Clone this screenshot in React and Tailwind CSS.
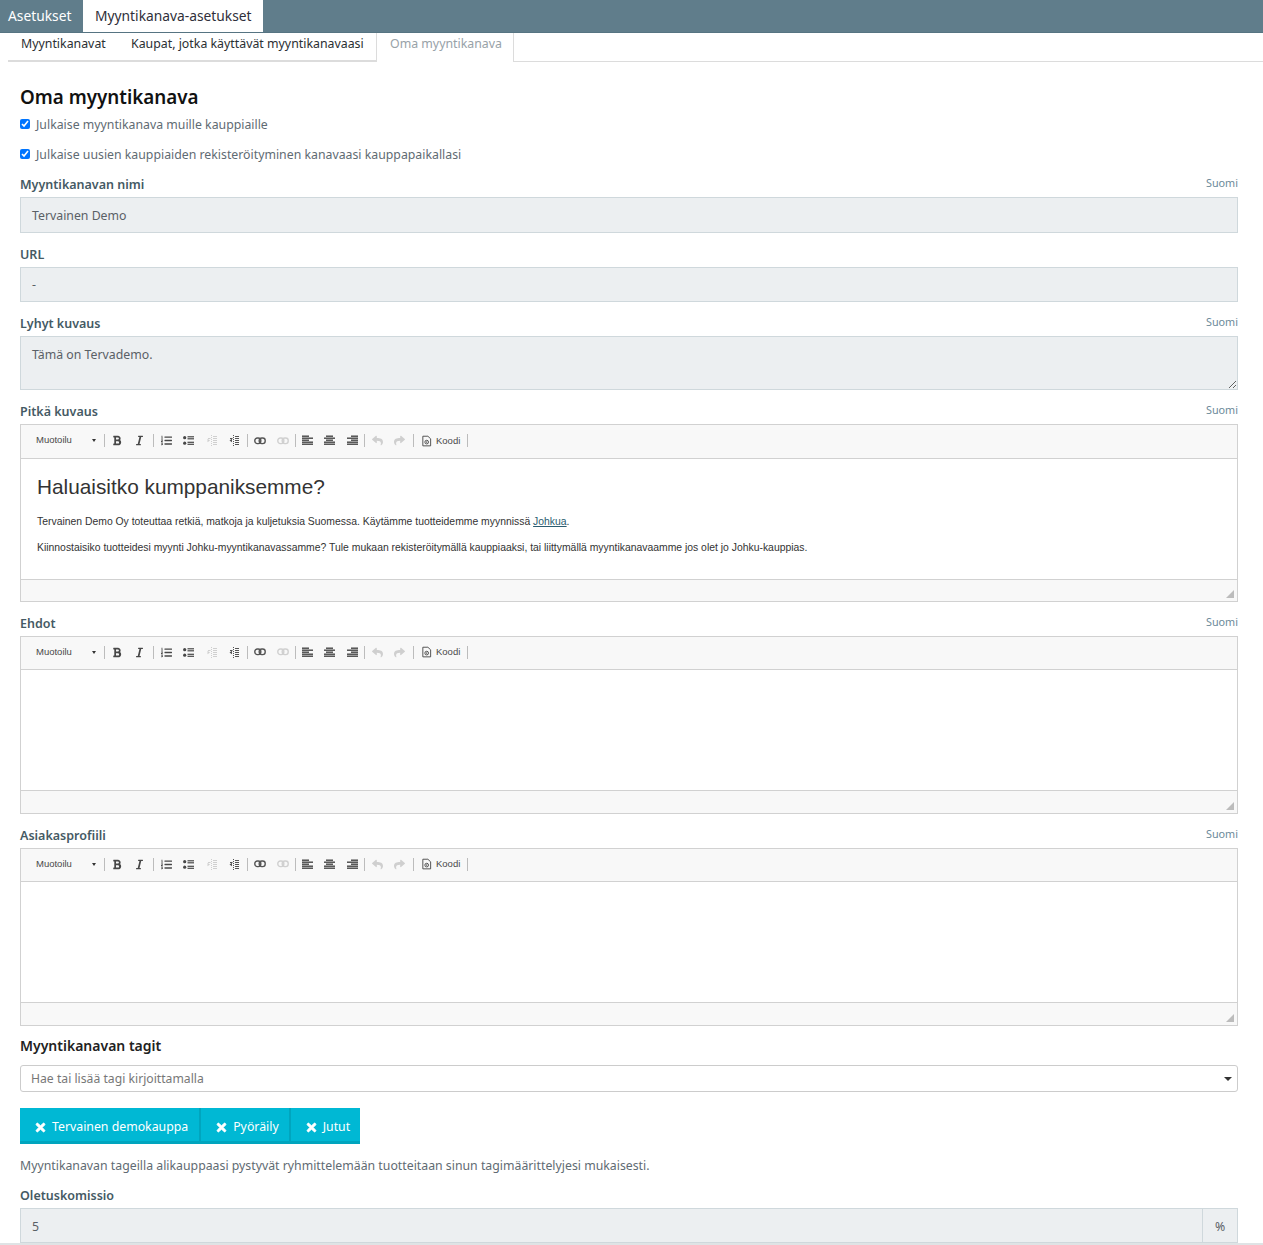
import React from 'react';
import { FaBold, FaItalic, FaListOl, FaReply, FaShare, FaTimes } from 'react-icons/fa';

function Sep() {
  return <span className="w-px h-[13px] bg-[#bcbcbc]" />;
}

function ToolIcon({ icon: Icon, faded, className }) {
  return (
    <span className="w-[22.5px] flex justify-center">
      <Icon className={`${faded ? 'text-[#cfcfcf]' : 'text-[#474747]'} ${className || 'w-[11px] h-[11px]'}`} />
    </span>
  );
}

// cke toolbar glyphs that the icon packs don't have in this shape
function AlignIcon({ rows }) {
  return (
    <svg viewBox="0 0 11 11" className="w-[11px] h-[11px]" fill="currentColor">
      {rows.map((r, i) => (
        <rect key={i} x={r[0]} y={i * 2 + 0.5} width={r[1]} height="1.4" />
      ))}
    </svg>
  );
}

function BulletIcon() {
  return (
    <svg viewBox="0 0 11 11" className="w-[11px] h-[11px]" fill="currentColor">
      <circle cx="1.7" cy="2.7" r="1.6" />
      <circle cx="1.7" cy="8.2" r="1.6" />
      <rect x="4.5" y="1.2" width="6.5" height="1.2" />
      <rect x="4.5" y="3.2" width="6.5" height="1.2" />
      <rect x="4.5" y="6.7" width="6.5" height="1.2" />
      <rect x="4.5" y="8.7" width="6.5" height="1.2" />
    </svg>
  );
}

function IndentIcon({ faded, flip }) {
  return (
    <svg viewBox="0 0 11 11" className={`w-[11px] h-[11px] ${faded ? 'text-[#cfcfcf]' : 'text-[#555]'}`} fill="currentColor">
      <path d="M5 0h1v1H5zM5 2h1v1H5zM5 4h1v1H5zM5 6h1v1H5zM5 8h1v1H5zM5 10h1v1H5z" />
      <rect x="7" y="1" width="4" height="1" />
      <rect x="7" y="3" width="4" height="1" />
      <rect x="7" y="5" width="4" height="1" />
      <rect x="7" y="7" width="4" height="1" />
      <rect x="7" y="9" width="4" height="1" />
      <rect x="2" y="3" width="2.5" height="1" />
      <path d={flip ? 'M1.5 5.5L4 3.8v3.4z' : 'M4 5.5L1.5 3.8v3.4z'} />
    </svg>
  );
}

function ChainIcon({ faded }) {
  return (
    <svg viewBox="0 0 12 8" className={`w-[12px] h-[8px] ${faded ? 'text-[#d0d0d0]' : 'text-[#555]'}`} fill="none" stroke="currentColor" strokeWidth="1.4">
      <rect x="0.8" y="1" width="6" height="5.6" rx="2.6" />
      <rect x="5.2" y="1" width="6" height="5.6" rx="2.6" />
    </svg>
  );
}

function SourceIcon() {
  return (
    <svg viewBox="0 0 12 12" className="w-[11px] h-[12px] text-[#474747]" fill="none" stroke="currentColor">
      <path d="M2 .8h5.5L10.5 3.6v7.7H2z" strokeWidth="1" />
      <circle cx="6.2" cy="7.2" r="2" strokeWidth="1" />
      <path d="M6.2 6.4v1.6" strokeWidth="1" />
    </svg>
  );
}

function Box({ children, faded }) {
  return (
    <span className={`w-[22.5px] flex justify-center ${faded ? 'text-[#cfcfcf]' : 'text-[#474747]'}`}>{children}</span>
  );
}

function Toolbar({ compact }) {
  return (
    <div className={`${compact ? 'h-[33px]' : 'h-[34px]'} pb-[2px] bg-[#f8f8f8] border-b border-[#d1d1d1] flex items-center pl-[15px] text-[#484848] shrink-0`}>
      <span className="w-[56px] text-[9.5px] font-['Liberation_Sans',sans-serif] leading-none -mt-px">Muotoilu</span>
      <span className="w-0 h-0 border-x-[2.5px] border-x-transparent border-t-[3px] border-t-[#333] mr-[8px]" />
      <Sep />
      <div className="flex items-center w-[48px] pl-[1px]">
        <ToolIcon icon={FaBold} className="w-[10px] h-[11px]" />
        <ToolIcon icon={FaItalic} className="w-[9px] h-[11px]" />
      </div>
      <Sep />
      <div className="flex items-center pl-[1px] w-[93px]">
        <ToolIcon icon={FaListOl} />
        <Box><BulletIcon /></Box>
        <Box><IndentIcon faded /></Box>
        <Box><IndentIcon flip /></Box>
      </div>
      <Sep />
      <div className="flex items-center pl-[1px] w-[47px]">
        <Box><ChainIcon /></Box>
        <Box><ChainIcon faded /></Box>
      </div>
      <Sep />
      <div className="flex items-center w-[68px]">
        <Box><AlignIcon rows={[[0, 7], [0, 11], [0, 7], [0, 11], [0, 11]]} /></Box>
        <Box><AlignIcon rows={[[2, 7], [0, 11], [2, 7], [0, 11], [0, 11]]} /></Box>
        <Box><AlignIcon rows={[[4, 7], [0, 11], [4, 7], [0, 11], [0, 11]]} /></Box>
      </div>
      <Sep />
      <div className="flex items-center w-[48px] pl-[1px]">
        <ToolIcon icon={FaReply} faded />
        <ToolIcon icon={FaShare} faded />
      </div>
      <Sep />
      <div className="flex items-center w-[53px] pl-[7px] gap-[4px]">
        <SourceIcon />
        <span className="text-[9.5px] font-['Liberation_Sans',sans-serif] leading-none">Koodi</span>
      </div>
      <Sep />
    </div>
  );
}

function Editor({ children, compact }) {
  return (
    <div className="border border-[#d1d1d1] flex flex-col h-[178px] bg-white">
      <Toolbar compact={compact} />
      <div className="flex-1 px-4 font-['Liberation_Sans',sans-serif] text-[#333]">{children}</div>
      <div className={`${compact ? 'h-[23px]' : 'h-[22px]'} bg-[#f8f8f8] border-t border-[#d1d1d1] flex justify-end items-end p-[3px] shrink-0`}>
        <span className="w-0 h-0 border-l-[8px] border-l-transparent border-b-[8px] border-b-[#bcbcbc]" />
      </div>
    </div>
  );
}

function Label({ children, lang }) {
  return (
    <div className="flex justify-between h-[27px] pt-[6px]">
      <span className="text-[12.5px] font-semibold leading-[18px] text-[#455a64]">{children}</span>
      {lang && <span className="text-[10.8px] leading-[14px] text-[#6c8a99]">Suomi</span>}
    </div>
  );
}

function ReadOnly({ value, className }) {
  return (
    <div className={`border border-[#cfd8dc] bg-[#eceff1] px-[11px] text-[12.3px] text-[#5a6066] ${className}`}>
      {value}
    </div>
  );
}

function Check({ children, className }) {
  return (
    <label className={`flex items-center gap-[6px] text-[12.3px] text-[#5f6b73] ${className}`}>
      <input type="checkbox" defaultChecked className="w-[10px] h-[10px] m-0 mb-[2px] accent-[#0075ff]" />
      {children}
    </label>
  );
}

function Tag({ children }) {
  return (
    <span className="h-[36px] pt-[5px] bg-[#00b8d4] border-b-[3px] border-[#00a5be] border-r-2 last:border-r-0 first:pr-[11px] flex items-center gap-[6px] pl-[15px] pr-[10px] text-[12.3px] text-white">
      <FaTimes className="w-[11px] h-[13px]" stroke="currentColor" strokeWidth="30" />
      {children}
    </span>
  );
}

export default function App() {
  return (
    <div className="h-[1245px] overflow-hidden bg-white font-['Noto_Sans',sans-serif]">
      <div className="h-[33px] bg-[#607d8b] border-b border-[#567482] flex text-[13.8px]">
        <span className="w-[83px] pl-[8px] leading-[32px] text-white">Asetukset</span>
        <span className="w-[180px] h-[32px] bg-white pl-[12px] leading-[32px] text-[#2f2f3a]">Myyntikanava-asetukset</span>
      </div>

      <div className="ml-[8px] h-[29px] border-b border-[#dcdcdc] flex text-[12.35px]">
        <span className="w-[110px] h-[28px] border-b border-[#dcdcdc] pl-[13px] leading-[21px] text-[#2b2f33]">Myyntikanavat</span>
        <span className="w-[258px] h-[28px] border-b border-[#dcdcdc] pl-[13px] leading-[21px] text-[#2b2f33]">Kaupat, jotka käyttävät myyntikanavaasi</span>
        <span className="w-[138px] h-[29px] bg-white border-x border-[#dcdcdc] pl-[13px] leading-[21px] text-[#98a2a8]">Oma myyntikanava</span>
      </div>

      <div className="px-[20px] w-[1258px]">
        <h1 className="text-[18.8px] font-semibold leading-[28px] text-[#111] mt-[21px]">Oma myyntikanava</h1>
        <Check className="h-[20px] mt-[4px]">Julkaise myyntikanava muille kauppiaille</Check>
        <Check className="h-[20px] mt-[10px]">Julkaise uusien kauppiaiden rekisteröityminen kanavaasi kauppapaikallasi</Check>

        <div className="mt-[5px]">
          <Label lang>Myyntikanavan nimi</Label>
          <ReadOnly value="Tervainen Demo" className="h-[36px] leading-[35px]" />
        </div>
        <div className="mt-[7px]">
          <Label>URL</Label>
          <ReadOnly value="-" className="h-[35px] leading-[33px]" />
        </div>
        <div className="mt-[7px]">
          <Label lang>Lyhyt kuvaus</Label>
          <textarea
            readOnly
            value="Tämä on Tervademo."
            className="block w-full h-[54px] border border-[#cfd8dc] bg-[#eceff1] px-[11px] pt-[7px] text-[12.3px] leading-[22px] text-[#5a6066] outline-none resize-y"
          />
        </div>
        <div className="mt-[7px]">
          <Label lang>Pitkä kuvaus</Label>
          <Editor>
            <h2 className="text-[20.8px] leading-[24px] mt-[16px]">Haluaisitko kumppaniksemme?</h2>
            <p className="text-[10.4px] leading-[13px] mt-[16px]">
              Tervainen Demo Oy toteuttaa retkiä, matkoja ja kuljetuksia Suomessa. Käytämme tuotteidemme myynnissä <span className="underline text-[#2b5c70]">Johkua</span>.
            </p>
            <p className="text-[10.4px] leading-[13px] mt-[13px]">
              Kiinnostaisiko tuotteidesi myynti Johku-myyntikanavassamme? Tule mukaan rekisteröitymällä kauppiaaksi, tai liittymällä myyntikanavaamme jos olet jo Johku-kauppias.
            </p>
          </Editor>
        </div>
        <div className="mt-[7px]">
          <Label lang>Ehdot</Label>
          <Editor compact />
        </div>
        <div className="mt-[7px]">
          <Label lang>Asiakasprofiili</Label>
          <Editor compact />
        </div>

        <h3 className="text-[14px] font-semibold leading-[20px] text-[#222] mt-[10px]">Myyntikanavan tagit</h3>
        <div className="mt-[9px] h-[27px] border border-[#ccc] rounded-[3px] flex items-center justify-between pl-[10px] pr-[5px] text-[12.2px] text-[#777]">
          <span className="mt-px">Hae tai lisää tagi kirjoittamalla</span>
          <span className="w-0 h-0 border-x-[4px] border-x-transparent border-t-[4px] border-t-[#333]" />
        </div>
        <div className="mt-[16px] flex">
          <Tag>Tervainen demokauppa</Tag>
          <Tag>Pyöräily</Tag>
          <Tag>Jutut</Tag>
        </div>
        <p className="text-[12.3px] leading-[18px] text-[#5f6b73] mt-[13px]">
          Myyntikanavan tageilla alikauppaasi pystyvät ryhmittelemään tuotteitaan sinun tagimäärittelyjesi mukaisesti.
        </p>
        <div className="mt-[6px]">
          <Label>Oletuskomissio</Label>
          <div className="flex h-[35px] border border-[#cfd8dc] bg-[#eceff1] text-[12.3px] text-[#5a6066]">
            <span className="flex-1 pl-[11px] leading-[35px]">5</span>
            <span className="w-[35px] border-l border-[#cfd8dc] text-center leading-[35px]">%</span>
          </div>
        </div>
      </div>
      <div className="h-[2px] bg-[#dfe3e5]" />
    </div>
  );
}
